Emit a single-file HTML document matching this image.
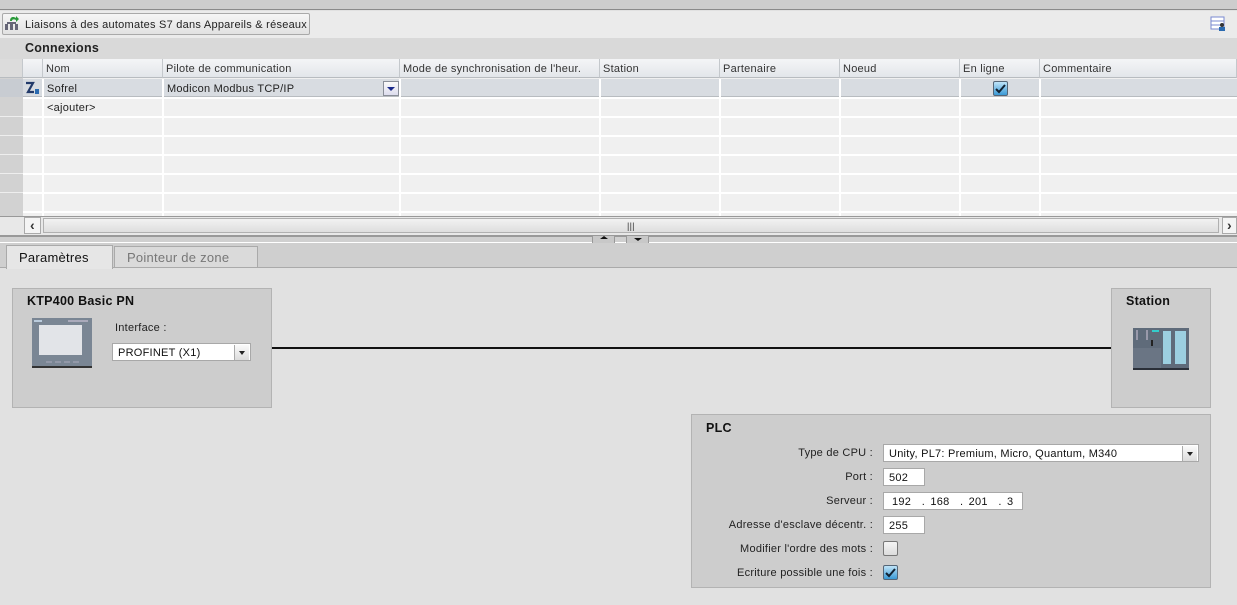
<!DOCTYPE html>
<html><head><meta charset="utf-8"><style>
*{margin:0;padding:0;box-sizing:border-box}
body{width:1237px;height:605px;overflow:hidden;background:#e1e1e1;font-family:"Liberation Sans",sans-serif;font-size:11px;letter-spacing:0.25px;color:#222;position:relative}
.a{position:absolute}
.hd{position:absolute;top:59px;height:19px;background:linear-gradient(#f4f5f7,#e3e6ea);border-right:1px solid #c4c8cc;border-bottom:1px solid #b8bcc0;padding:4px 0 0 3px;color:#333}
.vl{position:absolute;top:79px;height:137px;width:2px;background:#fff}
.hl{position:absolute;left:23px;width:1214px;height:2px;background:#fff}
.in{position:absolute;background:#fff;border:1px solid #a8a8a8;height:19px;padding:3px 0 0 5px;color:#111}
.lb{position:absolute;right:364px;text-align:right;color:#222}
.dd{position:absolute;right:1px;top:1px;width:15px;height:15px;background:linear-gradient(#fafafa,#dcdcdc);border-left:1px solid #aaa}
.dd:after{content:"";position:absolute;left:4px;top:6px;border:3px solid transparent;border-top:4px solid #222}
.cb{position:absolute;width:15px;height:15px;border:1px solid #567;border-radius:2px;background:linear-gradient(#bfe4f8,#3a9ad6)}
</style></head><body>
<div class="a" style="left:0;top:0;width:1237px;height:10px;background:#cdcdcd;border-bottom:1px solid #8a8a8a"></div>
<div class="a" style="left:0;top:11px;width:1237px;height:27px;background:#ebebeb"></div>
<div class="a" style="left:2px;top:13px;width:308px;height:22px;border:1px solid #a9a9a9;border-radius:2px;background:linear-gradient(#f6f6f6,#e2e2e2);padding:5px 0 0 22px;color:#222">Liaisons à des automates S7 dans Appareils &amp; réseaux</div>
<svg class="a" style="left:4px;top:15px" width="16" height="16"><rect x="1" y="9" width="3" height="6" fill="#667"/><rect x="6" y="9" width="3" height="6" fill="#667"/><rect x="11" y="9" width="3" height="6" fill="#667"/><rect x="3" y="7" width="9" height="2" fill="#667"/><path d="M6 6 C6 2 9 1 12 3 L12 1 L15 4 L12 7 L12 5 C10 4 8 4 8 6Z" fill="#2a9a3a"/></svg>
<svg class="a" style="left:1210px;top:16px" width="16" height="15"><rect x="1" y="1" width="13" height="12" fill="#fff" stroke="#7a8ad0"/><line x1="1" y1="5" x2="14" y2="5" stroke="#7a8ad0"/><line x1="1" y1="9" x2="14" y2="9" stroke="#7a8ad0"/><circle cx="12" cy="9" r="2" fill="#333"/><rect x="9" y="11" width="6" height="4" fill="#2a6ab0"/></svg>
<div class="a" style="left:0;top:38px;width:1237px;height:21px;background:#d9d9d9"></div>
<div class="a" style="left:25px;top:41px;font-weight:bold;font-size:12.5px;color:#222">Connexions</div>
<div class="a" style="left:0;top:59px;width:1237px;height:158px;background:#f0f0f0"></div>
<div class="a" style="left:0;top:59px;width:23px;height:158px;background:#d2d2d2"></div>
<div class="hd" style="left:0;width:23px;background:#dcdcdc"></div>
<div class="hd" style="left:23px;width:20px"></div>
<div class="hd" style="left:43px;width:120px">Nom</div>
<div class="hd" style="left:163px;width:237px">Pilote de communication</div>
<div class="hd" style="left:400px;width:200px">Mode de synchronisation de l'heur.</div>
<div class="hd" style="left:600px;width:120px">Station</div>
<div class="hd" style="left:720px;width:120px">Partenaire</div>
<div class="hd" style="left:840px;width:120px">Noeud</div>
<div class="hd" style="left:960px;width:80px">En ligne</div>
<div class="hd" style="left:1040px;width:197px">Commentaire</div>
<div class="a" style="left:0;top:79px;width:1237px;height:18px;background:#d8dce1;border-bottom:1px solid #b8bcc0"></div>
<div class="a" style="left:0;top:79px;width:23px;height:18px;background:#c8ccd2"></div>
<div class="hl" style="top:97px"></div><div class="hl" style="top:116px"></div><div class="hl" style="top:135px"></div><div class="hl" style="top:154px"></div><div class="hl" style="top:173px"></div><div class="hl" style="top:192px"></div><div class="hl" style="top:211px"></div>
<div class="a" style="left:0;top:116px;width:23px;height:1px;background:#eee"></div><div class="a" style="left:0;top:135px;width:23px;height:1px;background:#eee"></div><div class="a" style="left:0;top:154px;width:23px;height:1px;background:#eee"></div><div class="a" style="left:0;top:173px;width:23px;height:1px;background:#eee"></div><div class="a" style="left:0;top:192px;width:23px;height:1px;background:#eee"></div>
<div class="vl" style="left:42px"></div><div class="vl" style="left:162px"></div><div class="vl" style="left:399px"></div><div class="vl" style="left:599px"></div><div class="vl" style="left:719px"></div><div class="vl" style="left:839px"></div><div class="vl" style="left:959px"></div><div class="vl" style="left:1039px"></div>
<svg class="a" style="left:25px;top:81px" width="15" height="14"><path d="M1 2 H8 L3 11 H9" stroke="#223a6a" stroke-width="2.2" fill="none"/><rect x="10" y="8" width="4" height="5" fill="#2a6ab0"/></svg>
<div class="a" style="left:47px;top:83px">Sofrel</div>
<div class="a" style="left:167px;top:83px">Modicon Modbus TCP/IP</div>
<div class="a" style="left:383px;top:81px;width:16px;height:15px;border:1px solid #8a8f99;background:linear-gradient(#fafafa,#dde)"><div style="position:absolute;left:3px;top:5px;border:4px solid transparent;border-top:4px solid #1a2a8a"></div></div>
<div class="cb" style="left:993px;top:81px"><svg width="13" height="13" style="position:absolute;left:0;top:0"><path d="M2 7 L5 10 L11 3" stroke="#123" stroke-width="2" fill="none"/></svg></div>
<div class="a" style="left:47px;top:102px">&lt;ajouter&gt;</div>
<div class="a" style="left:0;top:216px;width:1237px;height:19px;background:#e8e8e8;border-top:1px solid #999"></div>
<div class="a" style="left:24px;top:217px;width:17px;height:17px;border:1px solid #aaa;background:#f4f4f4;text-align:center;font-weight:bold;font-size:14px;line-height:14px;color:#333">‹</div>
<div class="a" style="left:43px;top:218px;width:1176px;height:15px;border:1px solid #b0b0b0;background:linear-gradient(#f2f2f2,#dedede)"></div>
<div class="a" style="left:627px;top:221px;font-size:9px;color:#333">|||</div>
<div class="a" style="left:1222px;top:217px;width:15px;height:17px;border:1px solid #aaa;background:#f4f4f4;text-align:center;font-weight:bold;font-size:14px;line-height:14px;color:#333">›</div>
<div class="a" style="left:0;top:235px;width:1237px;height:8px;background:#d0d0d0;border-top:2px solid #999;border-bottom:1px solid #fff"></div>
<div class="a" style="left:592px;top:236px;width:23px;height:7px;background:#c8c8c8;border-left:1px solid #999;border-right:1px solid #999"><div style="position:absolute;left:7px;top:0;border:4px solid transparent;border-bottom:3px solid #111;border-top:0"></div></div>
<div class="a" style="left:626px;top:236px;width:23px;height:7px;background:#c8c8c8;border-left:1px solid #999;border-right:1px solid #999"><div style="position:absolute;left:7px;top:2px;border:4px solid transparent;border-top:3px solid #111;border-bottom:0"></div></div>
<div class="a" style="left:0;top:243px;width:1237px;height:25px;background:#cfcfcf;border-bottom:1px solid #aaa"></div>
<div class="a" style="left:6px;top:245px;width:107px;height:24px;background:#e6e6e6;border:1px solid #aaa;border-bottom:none;padding:4px 0 0 12px;font-size:13px;color:#111">Paramètres</div>
<div class="a" style="left:114px;top:246px;width:144px;height:21px;background:#dadada;border:1px solid #aaa;border-bottom:none;padding:3px 0 0 12px;font-size:13px;color:#777">Pointeur de zone</div>
<div class="a" style="left:12px;top:288px;width:260px;height:120px;background:#cdcdcd;border:1px solid #b3b3b3"></div>
<div class="a" style="left:27px;top:294px;font-weight:bold;font-size:12.5px;color:#111">KTP400 Basic PN</div>
<svg class="a" style="left:32px;top:318px" width="60" height="50"><rect x="0" y="0" width="60" height="48" fill="#7a8694"/><rect x="7" y="7" width="43" height="30" fill="#e2e4e8"/><rect x="2" y="2" width="8" height="2" fill="#bcd"/><rect x="36" y="2" width="20" height="2" fill="#aab"/><path d="M14 44h6M23 44h6M32 44h6M41 44h6" stroke="#aab"/><rect x="0" y="48" width="60" height="2" fill="#333"/></svg>
<div class="a" style="left:115px;top:322px;color:#222">Interface :</div>
<div class="in" style="left:112px;top:343px;width:139px;height:18px;padding-top:3px;font-size:11px">PROFINET (X1)<div class="dd"></div></div>
<div class="a" style="left:272px;top:347px;width:839px;height:2px;background:#111"></div>
<div class="a" style="left:1111px;top:288px;width:100px;height:120px;background:#cdcdcd;border:1px solid #b3b3b3"></div>
<div class="a" style="left:1126px;top:294px;font-weight:bold;font-size:12.5px;color:#111">Station</div>
<svg class="a" style="left:1133px;top:328px" width="56" height="42"><rect width="56" height="40" fill="#5f6b7a"/><rect y="40" width="56" height="2" fill="#2a2f38"/><rect x="0" y="20" width="28" height="20" fill="#6a7584"/><rect x="30" y="3" width="8" height="33" fill="#9ccfe0"/><rect x="42" y="3" width="11" height="33" fill="#9ccfe0"/><rect x="19" y="2" width="7" height="2" fill="#3cc"/><rect x="3" y="2" width="2" height="10" fill="#99a"/><rect x="13" y="2" width="2" height="10" fill="#99a"/><rect x="18" y="12" width="2" height="6" fill="#222"/></svg>
<div class="a" style="left:691px;top:414px;width:520px;height:174px;background:#cdcdcd;border:1px solid #b3b3b3"></div>
<div class="a" style="left:706px;top:421px;font-weight:bold;font-size:12.5px;color:#111">PLC</div>
<div class="lb" style="top:447px">Type de CPU :</div>
<div class="in" style="left:883px;top:444px;width:316px;height:18px">Unity, PL7: Premium, Micro, Quantum, M340<div class="dd"></div></div>
<div class="lb" style="top:471px">Port :</div>
<div class="in" style="left:883px;top:468px;width:42px;height:18px">502</div>
<div class="lb" style="top:495px">Serveur :</div>
<div class="in" style="left:883px;top:492px;width:140px;height:18px;padding-left:8px;word-spacing:2px">192 &nbsp;. 168 &nbsp;. 201 &nbsp;. 3</div>
<div class="lb" style="top:519px">Adresse d'esclave décentr. :</div>
<div class="in" style="left:883px;top:516px;width:42px;height:18px">255</div>
<div class="lb" style="top:543px">Modifier l'ordre des mots :</div>
<div class="a" style="left:883px;top:541px;width:15px;height:15px;border:1px solid #777;border-radius:2px;background:linear-gradient(#f4f4f4,#dcdcdc)"></div>
<div class="lb" style="top:567px">Ecriture possible une fois :</div>
<div class="cb" style="left:883px;top:565px"><svg width="13" height="13" style="position:absolute;left:0;top:0"><path d="M2 7 L5 10 L11 3" stroke="#123" stroke-width="2" fill="none"/></svg></div>
</body></html>
